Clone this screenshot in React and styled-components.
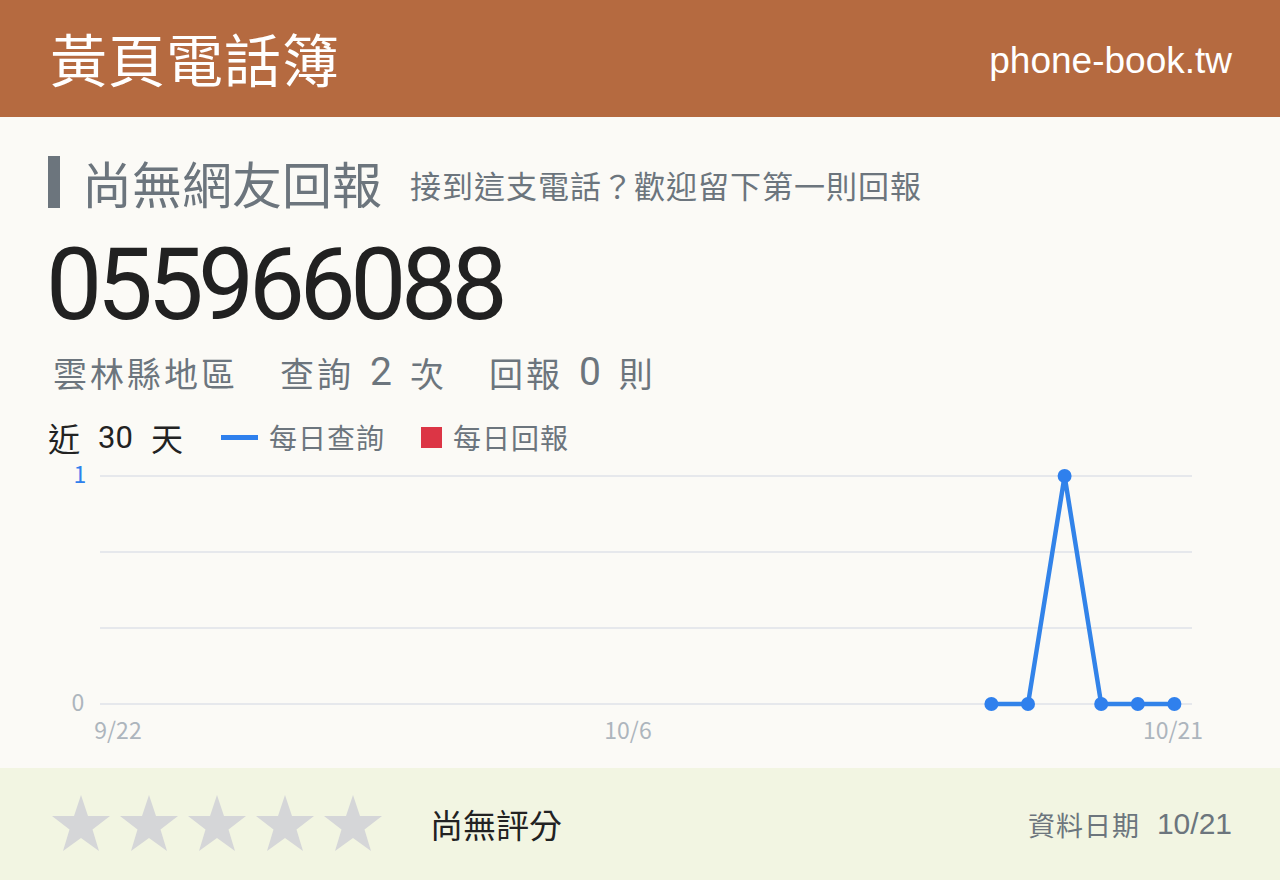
import React from 'react'
import styled, { createGlobalStyle } from "styled-components"

const GlobalStyle = createGlobalStyle`
html, body {
    margin:0;
    padding:0;
    background-color:#FBFAF6;
}
body {
    font-family:"Noto Sans CJK TC", "Noto Sans", sans-serif;
}
`;

// last 30 days of lookups, only the days with data get a point
const lookups = [...Array(24).fill(null), 0, 0, 1, 0, 0, 0];

const X0 = 65;
const STEP = 36.6;
const TOP = 21;
const ROW = 76;
const yFor = (v) => TOP + 3 * ROW - v * 3 * ROW;

const Star = () => (
    <svg width="58" height="56" viewBox="0 0 58 56">
        <polygon
            fill="#D5D6D8"
            points="29,0 36,21 58,21 40.5,34.5 47,56 29,43 11,56 17.5,34.5 0,21 22,21"
        />
    </svg>
)

const Chart = () => {
    const pts = lookups
        .map((v, i) => (v === null ? null : [X0 + i * STEP, yFor(v)]))
        .filter(Boolean);
    const base = yFor(0);
    return (
        <ChartBox viewBox="0 0 1184 313" width="1184" height="313">
            {[0, 1, 2, 3].map((r) => (
                <line key={r} x1="52" x2="1144" y1={TOP + r * ROW} y2={TOP + r * ROW} stroke="#E6E8EC" strokeWidth="2" />
            ))}
            <AxisText x="32" y={TOP + 1} fill="#2F80ED" textAnchor="middle">1</AxisText>
            <AxisText x="30" y={base + 1} fill="#ADB5BD" textAnchor="middle">0</AxisText>
            <AxisText x="70" y={base + 29} fill="#ADB5BD" textAnchor="middle">9/22</AxisText>
            <AxisText x="580" y={base + 29} fill="#ADB5BD" textAnchor="middle">10/6</AxisText>
            <AxisText x="1125" y={base + 29} fill="#ADB5BD" textAnchor="middle">10/21</AxisText>
            <polyline
                points={pts.map((p) => p.join(",")).join(" ")}
                fill="none"
                stroke="#3283E9"
                strokeWidth="4.5"
                strokeLinejoin="round"
            />
            {pts.map(([x, y]) => (
                <circle key={x} cx={x} cy={y} r="7" fill="#2F80ED" />
            ))}
        </ChartBox>
    )
}

const App = () => {
    return (
        <Page>
            <GlobalStyle />
            <Header>
                <Brand>黃頁電話簿</Brand>
                <Domain>phone-book.tw</Domain>
            </Header>
            <Main>
                <TitleRow>
                    <Bar />
                    <Title>尚無網友回報</Title>
                    <Sub>接到這支電話？歡迎留下第一則回報</Sub>
                </TitleRow>
                <Number>055966088</Number>
                <Stats>
                    <Stat>雲林縣地區</Stat>
                    <Stat>查詢<Num>2</Num>次</Stat>
                    <Stat>回報<Num>0</Num>則</Stat>
                </Stats>
                <Legend>
                    <Range>
                        <span>近</span>
                        <RangeNum>30</RangeNum>
                        <span>天</span>
                    </Range>
                    <Key>
                        <Swatch $w={37} $h={5} $color="#2F80ED" />
                        每日查詢
                    </Key>
                    <Key>
                        <Swatch $w={21} $h={21} $color="#DC3545" />
                        每日回報
                    </Key>
                </Legend>
                <Chart />
            </Main>
            <Footer>
                <Stars>
                    {[0, 1, 2, 3, 4].map((i) => <Star key={i} />)}
                </Stars>
                <NoRating>尚無評分</NoRating>
                <Updated>
                    資料日期<UpdatedDate>10/21</UpdatedDate>
                </Updated>
            </Footer>
        </Page>
    )
}

export default App

const Page = styled.div`
width:1280px;
height:880px;
display:flex;
flex-direction:column;
background-color:#FBFAF6;
`;
const Header = styled.div`
height:117px;
flex-shrink:0;
background-color:#B56A40;
display:flex;
align-items:center;
justify-content:space-between;
padding:0 48px 0 50px;
box-sizing:border-box;
color:#fff;
`;
const Brand = styled.div`
font-size:57px;
line-height:1;
letter-spacing:1px;
margin-top:-2px;
`;
const Domain = styled.div`
font-family:"Liberation Sans", Arial, sans-serif;
font-size:37px;
margin-top:4px;
`;
const Main = styled.div`
flex:1;
padding:39px 48px 0 48px;
display:flex;
flex-direction:column;
`;
const TitleRow = styled.div`
display:flex;
align-items:center;
height:52px;
color:#6C757D;
`;
const Bar = styled.div`
width:12px;
height:52px;
background-color:#6C757D;
`;
const Title = styled.div`
font-size:50px;
line-height:1;
margin-left:22px;
`;
const Sub = styled.div`
font-size:31px;
line-height:1;
letter-spacing:1px;
margin-left:28px;
margin-top:4px;
`;
const Number = styled.div`
font-family:Roboto, "Liberation Sans", sans-serif;
font-size:100px;
line-height:100px;
letter-spacing:-5.5px;
color:#212121;
margin-top:27px;
margin-left:-2px;
`;
const Stats = styled.div`
display:flex;
gap:42px;
height:44px;
align-items:center;
margin-top:15px;
margin-left:5px;
font-size:34px;
letter-spacing:3px;
color:#6C757D;
`;
const Stat = styled.span`
display:flex;
align-items:center;
white-space:pre;
`;
const Num = styled.span`
font-family:Roboto, "Liberation Sans", sans-serif;
font-size:39px;
letter-spacing:0;
margin:0 18px 0 16px;
`;
const Legend = styled.div`
display:flex;
align-items:center;
height:36px;
margin-top:25px;
`;
const Range = styled.div`
display:flex;
align-items:center;
gap:18px;
font-size:32px;
color:#222;
margin-right:38px;
`;
const RangeNum = styled.span`
font-family:Roboto, "Liberation Sans", sans-serif;
font-size:31px;
`;
const Key = styled.div`
display:flex;
align-items:center;
font-size:28px;
color:#6C757D;
letter-spacing:1px;
margin-right:36px;
`;
const Swatch = styled.span`
display:inline-block;
width:${p => p.$w}px;
height:${p => p.$h}px;
background-color:${p => p.$color};
margin-right:11px;
`;
const ChartBox = styled.svg`
display:block;
`;
const AxisText = styled.text`
font-family:"Noto Sans CJK TC", sans-serif;
font-size:23px;
dominant-baseline:middle;
`;
const Footer = styled.div`
height:112px;
flex-shrink:0;
background-color:#F2F5E2;
display:flex;
align-items:center;
padding:0 48px 0 52px;
box-sizing:border-box;
`;
const Stars = styled.div`
display:flex;
gap:10px;
margin-top:-2px;
`;
const NoRating = styled.div`
font-size:33px;
color:#222;
margin-left:48px;
`;
const Updated = styled.div`
margin-left:auto;
display:flex;
align-items:center;
font-size:27px;
color:#6C757D;
letter-spacing:1px;
white-space:pre;
`;
const UpdatedDate = styled.span`
font-family:"Liberation Sans", Arial, sans-serif;
font-size:30px;
letter-spacing:0;
margin-left:17px;
`;
